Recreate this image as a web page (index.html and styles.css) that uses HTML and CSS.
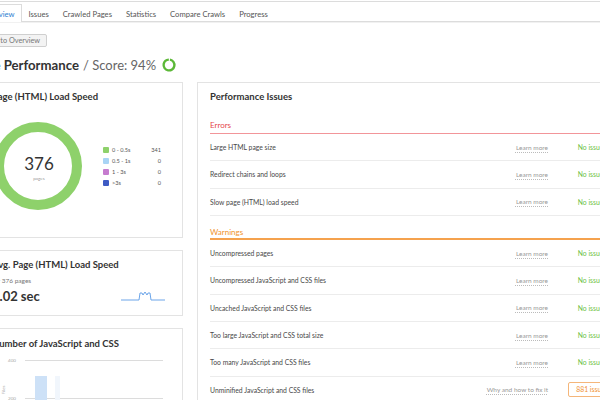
FILE: index.html
```html
<!DOCTYPE html>
<html>
<head>
<meta charset="utf-8">
<link rel="stylesheet" href="styles.css">
</head>
<body>
<div class="page">
  <nav class="tabs">
    <span class="tab active">Overview</span>
    <span class="tab">Issues</span>
    <span class="tab">Crawled Pages</span>
    <span class="tab">Statistics</span>
    <span class="tab">Compare Crawls</span>
    <span class="tab">Progress</span>
  </nav>
  <div class="toolbar"><button class="back">Back to Overview</button></div>
  <h1 class="title"><b>Site Performance</b><span class="score">/ Score: 94%</span>
    <svg class="ring" width="14" height="14" viewBox="0 0 14 14"><circle cx="7" cy="7" r="5.4" fill="none" stroke="#5cb838" stroke-width="2.4" stroke-dasharray="31.9 2" transform="rotate(-80 7 7)"/></svg>
  </h1>
  <div class="grid">
    <div class="col">
      <section class="card speed">
        <h2 class="card-title">Page (HTML) Load Speed</h2>
        <div class="speed-body">
          <svg class="donut" width="88" height="88" viewBox="0 0 88 88">
            <circle cx="44" cy="44" r="39" fill="none" stroke="#8ed16b" stroke-width="10"/>
            <text class="donut-num" x="45" y="48" text-anchor="middle">376</text>
            <text class="donut-sub" x="45" y="57.5" text-anchor="middle">pages</text>
          </svg>
          <ul class="legend">
            <li><i class="sw sw-green"></i><span class="lbl">0 - 0.5s</span><span class="val">341</span></li>
            <li><i class="sw sw-light"></i><span class="lbl">0.5 - 1s</span><span class="val">0</span></li>
            <li><i class="sw sw-purple"></i><span class="lbl">1 - 3s</span><span class="val">0</span></li>
            <li><i class="sw sw-blue"></i><span class="lbl">&gt;3s</span><span class="val">0</span></li>
          </ul>
        </div>
      </section>
      <section class="card avg">
        <h2 class="card-title">Avg. Page (HTML) Load Speed</h2>
        <div class="sub">for 376 pages</div>
        <div class="avg-row">
          <span class="avg-value">0.02 sec</span>
          <svg class="spark" width="44" height="12" viewBox="0 0 44 12"><polyline points="0,10 18,10 19,3 21,3 22,5 24,2 26,5 27,3 29,3 30,10 44,10" fill="none" stroke="#5b9be6" stroke-width="0.9"/></svg>
        </div>
      </section>
      <section class="card js">
        <h2 class="card-title">Number of JavaScript and CSS</h2>
        <svg class="chart" width="177" height="60" viewBox="0 0 177 60">
          <line x1="33" y1="7.5" x2="171" y2="7.5" stroke="#dcdcdc" stroke-width="1"/>
          <line x1="33" y1="45.5" x2="171" y2="45.5" stroke="#dcdcdc" stroke-width="1"/>
          <rect x="63" y="23" width="5" height="40" fill="#f1f6fc"/>
          <rect x="43" y="23" width="12" height="40" fill="#cde1f7"/>
          <text class="axis" x="24" y="9.2" text-anchor="end">400</text>
          <text class="axis" x="24" y="47.2" text-anchor="end">200</text>
          <text class="axis" transform="translate(13 37) rotate(-90)" text-anchor="middle">Files</text>
        </svg>
      </section>
    </div>
    <section class="card issues">
      <h2 class="card-title">Performance Issues</h2>
      <div class="group-head errors">Errors</div>
      <div class="row"><span class="name">Large HTML page size</span><span class="learn">Learn more</span><span class="status">No issues</span></div>
      <div class="row"><span class="name">Redirect chains and loops</span><span class="learn">Learn more</span><span class="status">No issues</span></div>
      <div class="row"><span class="name">Slow page (HTML) load speed</span><span class="learn">Learn more</span><span class="status">No issues</span></div>
      <div class="group-head warnings">Warnings</div>
      <div class="row"><span class="name">Uncompressed pages</span><span class="learn">Learn more</span><span class="status">No issues</span></div>
      <div class="row"><span class="name">Uncompressed JavaScript and CSS files</span><span class="learn">Learn more</span><span class="status">No issues</span></div>
      <div class="row"><span class="name">Uncached JavaScript and CSS files</span><span class="learn">Learn more</span><span class="status">No issues</span></div>
      <div class="row"><span class="name">Too large JavaScript and CSS total size</span><span class="learn">Learn more</span><span class="status">No issues</span></div>
      <div class="row"><span class="name">Too many JavaScript and CSS files</span><span class="learn">Learn more</span><span class="status">No issues</span></div>
      <div class="row"><span class="name">Unminified JavaScript and CSS files</span><span class="learn">Why and how to fix it</span><span class="status"><span class="badge">881 issues</span></span></div>
    </section>
  </div>
</div>
</body>
</html>
```
FILE: styles.css
```css
* { box-sizing: border-box; }
html, body { margin: 0; padding: 0; background: #fff; }
body {
  width: 600px;
  height: 400px;
  overflow: hidden;
  font-family: Lato, "Open Sans", sans-serif;
  color: #333;
}
.page { margin-left: -22px; width: 680px; padding-top: 1px; }

.tabs {
  display: flex;
  height: 21px;
  padding-left: 0;
  border-top: 1px solid #dcdcdc;
  border-bottom: 1px solid #dcdcdc;
  box-shadow: 0 1px 0 #f1f1f1;
  font-size: 7.65px;
  color: #555;
}
.tab {
  display: flex;
  align-items: center;
  height: 18px;
  margin-top: 2px;
  margin-bottom: -1px;
  padding: 0 6px;
  border: 1px solid transparent;
  border-bottom: 0;
}
.tab.active { margin-left: -3px; border-color: #dcdcdc; background: #fff; color: #2f80d1; }

.toolbar { padding-top: 12px; }
.back {
  display: block;
  height: 13px;
  margin: 0 0 0 -2px;
  padding: 0 6px;
  font: 7.3px Lato, sans-serif;
  line-height: 11px;
  color: #777;
  background: #f3f3f3;
  border: 1px solid #cfcfcf;
  border-radius: 2px;
}

.title {
  display: flex;
  align-items: center;
  height: 16px;
  margin: 10px 0 0;
  font-size: 13.2px;
  line-height: 16px;
  font-weight: 400;
}
.title b { font-weight: 700; color: #333; }
.score { margin-left: 4px; color: #666; font-size: 13px; }
.ring { margin-left: 6px; }

.grid { display: flex; align-items: flex-start; gap: 14px; margin-top: 9px; }
.col { width: 205px; display: flex; flex-direction: column; gap: 12px; }
.card { background: #fff; border: 1px solid #e3e3e3; padding: 8px 13px; }
.card-title { margin: 0; font-size: 9.5px; line-height: 12px; font-weight: 700; color: #333; }

.speed { height: 156px; }
.speed-body { display: flex; align-items: center; margin-top: 19px; }
.donut { display: block; margin-left: 2px; }
.donut-num { font-family: Lato, sans-serif; font-size: 17px; fill: #333; }
.donut-sub { font-family: Lato, sans-serif; font-size: 4.5px; fill: #999; }
.legend { list-style: none; margin: 0 0 0 21px; padding: 0; width: 58px; }
.legend li { display: flex; align-items: center; height: 11px; font-size: 5.6px; color: #555; }
.sw { display: block; width: 6px; height: 6px; margin-right: 3px; border-radius: 1px; }
.sw-green { background: #8ed16b; }
.sw-light { background: #a9d4f5; }
.sw-purple { background: #c67ccf; }
.sw-blue { background: #3e5bc4; }
.lbl { flex: 1; }
.val { text-align: right; }

.avg { height: 66px; }
.sub { margin-top: 5px; font-size: 6.5px; line-height: 9px; color: #777; }
.avg-row { display: flex; justify-content: space-between; align-items: flex-end; margin-top: 3px; }
.avg-value { font-size: 13px; line-height: 16px; font-weight: 700; color: #333; }
.spark { display: block; margin: 0 4px 2px 0; }

.js { height: 110px; padding-top: 9px; }
.chart { display: block; margin: 3px 0 0 0; }
.axis { font-family: Lato, sans-serif; font-size: 4.6px; fill: #aaa; }

.issues { width: 440px; height: 340px; padding: 8px 14px 8px 12px; }
.group-head { font-size: 8px; line-height: 12px; }
.errors { margin-top: 16px; padding-bottom: 2px; color: #e5484d; border-bottom: 1px solid #f29599; }
.warnings { margin-top: 10px; color: #f0932b; border-bottom: 2px solid #f5a24e; }
.row {
  display: flex;
  align-items: center;
  height: 27.33px;
  border-bottom: 1px solid #ececec;
  font-size: 6.8px;
  color: #484848;
}
.name { flex: 1; }
.learn {
  margin-right: 14px;
  font-size: 6.5px;
  color: #999;
  text-decoration: underline dotted #bbb;
  text-underline-offset: 2px;
}
.status { width: 60px; text-align: center; font-size: 6.8px; color: #6cbf45; }
.badge {
  display: inline-block;
  height: 15px;
  padding: 0 7px;
  line-height: 13px;
  border: 1px solid #f5b67a;
  border-radius: 2px;
  color: #f0902f;
}
```
